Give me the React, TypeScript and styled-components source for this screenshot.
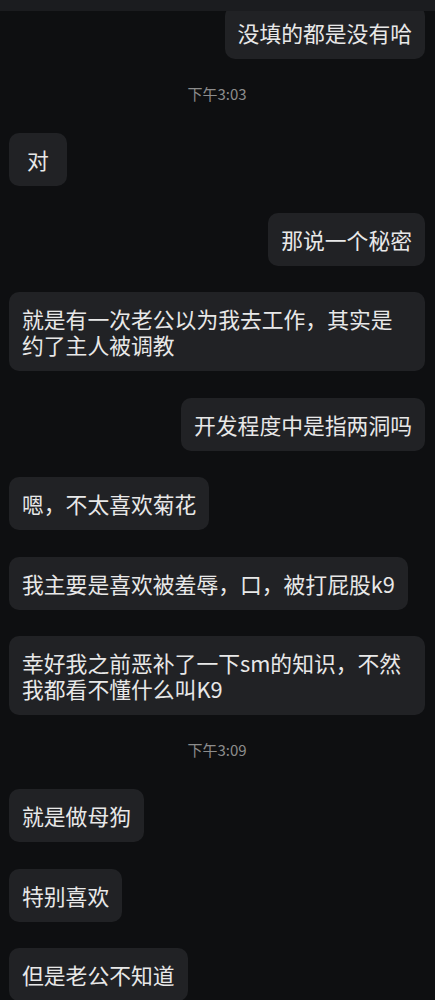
import React from "react";
import styled, { createGlobalStyle } from "styled-components";

const Global = createGlobalStyle`
  html, body { margin: 0; padding: 0; background: #0e0f11; }
  body { font-family: "Noto Sans CJK SC", "Noto Sans", sans-serif; }
`;

const Screen = styled.div`
  width: 435px;
  height: 1000px;
  display: flex;
  flex-direction: column;
  background: #0e0f11;
  overflow: hidden;
`;

const TopBar = styled.div`
  height: 11px;
  flex: none;
  background: #1b1c1f;
  position: relative;
  z-index: 1;
`;

const Scroll = styled.div`
  flex: 1;
  overflow: hidden;
`;

const List = styled.div`
  display: flex;
  flex-direction: column;
  gap: 26.5px;
  padding: 0 10px 0 9px;
  margin-top: -5px;
`;

const Row = styled.div<{ $me?: boolean }>`
  display: flex;
  justify-content: ${(p) => (p.$me ? "flex-end" : "flex-start")};
`;

const Bubble = styled.div`
  max-width: 416px;
  min-width: 58px;
  box-sizing: border-box;
  padding: 14px 13px 13px;
  background: #212225;
  border-radius: 10px;
  color: #e8e8e8;
  font-size: 21.8px;
  line-height: 26px;
  text-align: left;
  word-break: break-all;
`;

const Single = styled.span`
  display: block;
  text-align: center;
`;

const Stamp = styled.div`
  text-align: center;
  color: #8c8c8c;
  font-size: 15px;
  line-height: 20px;
  margin: -1.5px 0 2.5px;
`;

type Item = { t: "ts"; text: string } | { t: "msg"; me?: boolean; text: string };

const items: Item[] = [
  { t: "msg", me: true, text: "没填的都是没有哈" },
  { t: "ts", text: "下午3:03" },
  { t: "msg", text: "对" },
  { t: "msg", me: true, text: "那说一个秘密" },
  { t: "msg", text: "就是有一次老公以为我去工作，其实是约了主人被调教" },
  { t: "msg", me: true, text: "开发程度中是指两洞吗" },
  { t: "msg", text: "嗯，不太喜欢菊花" },
  { t: "msg", text: "我主要是喜欢被羞辱，口，被打屁股k9" },
  { t: "msg", text: "幸好我之前恶补了一下sm的知识，不然我都看不懂什么叫K9" },
  { t: "ts", text: "下午3:09" },
  { t: "msg", text: "就是做母狗" },
  { t: "msg", text: "特别喜欢" },
  { t: "msg", text: "但是老公不知道" },
];

export default function App() {
  return (
    <>
      <Global />
      <Screen>
        <TopBar />
        <Scroll>
          <List>
            {items.map((it, i) =>
              it.t === "ts" ? (
                <Stamp key={i}>{it.text}</Stamp>
              ) : (
                <Row key={i} $me={it.me}>
                  <Bubble>
                    {it.text.length === 1 ? <Single>{it.text}</Single> : it.text}
                  </Bubble>
                </Row>
              )
            )}
          </List>
        </Scroll>
      </Screen>
    </>
  );
}
